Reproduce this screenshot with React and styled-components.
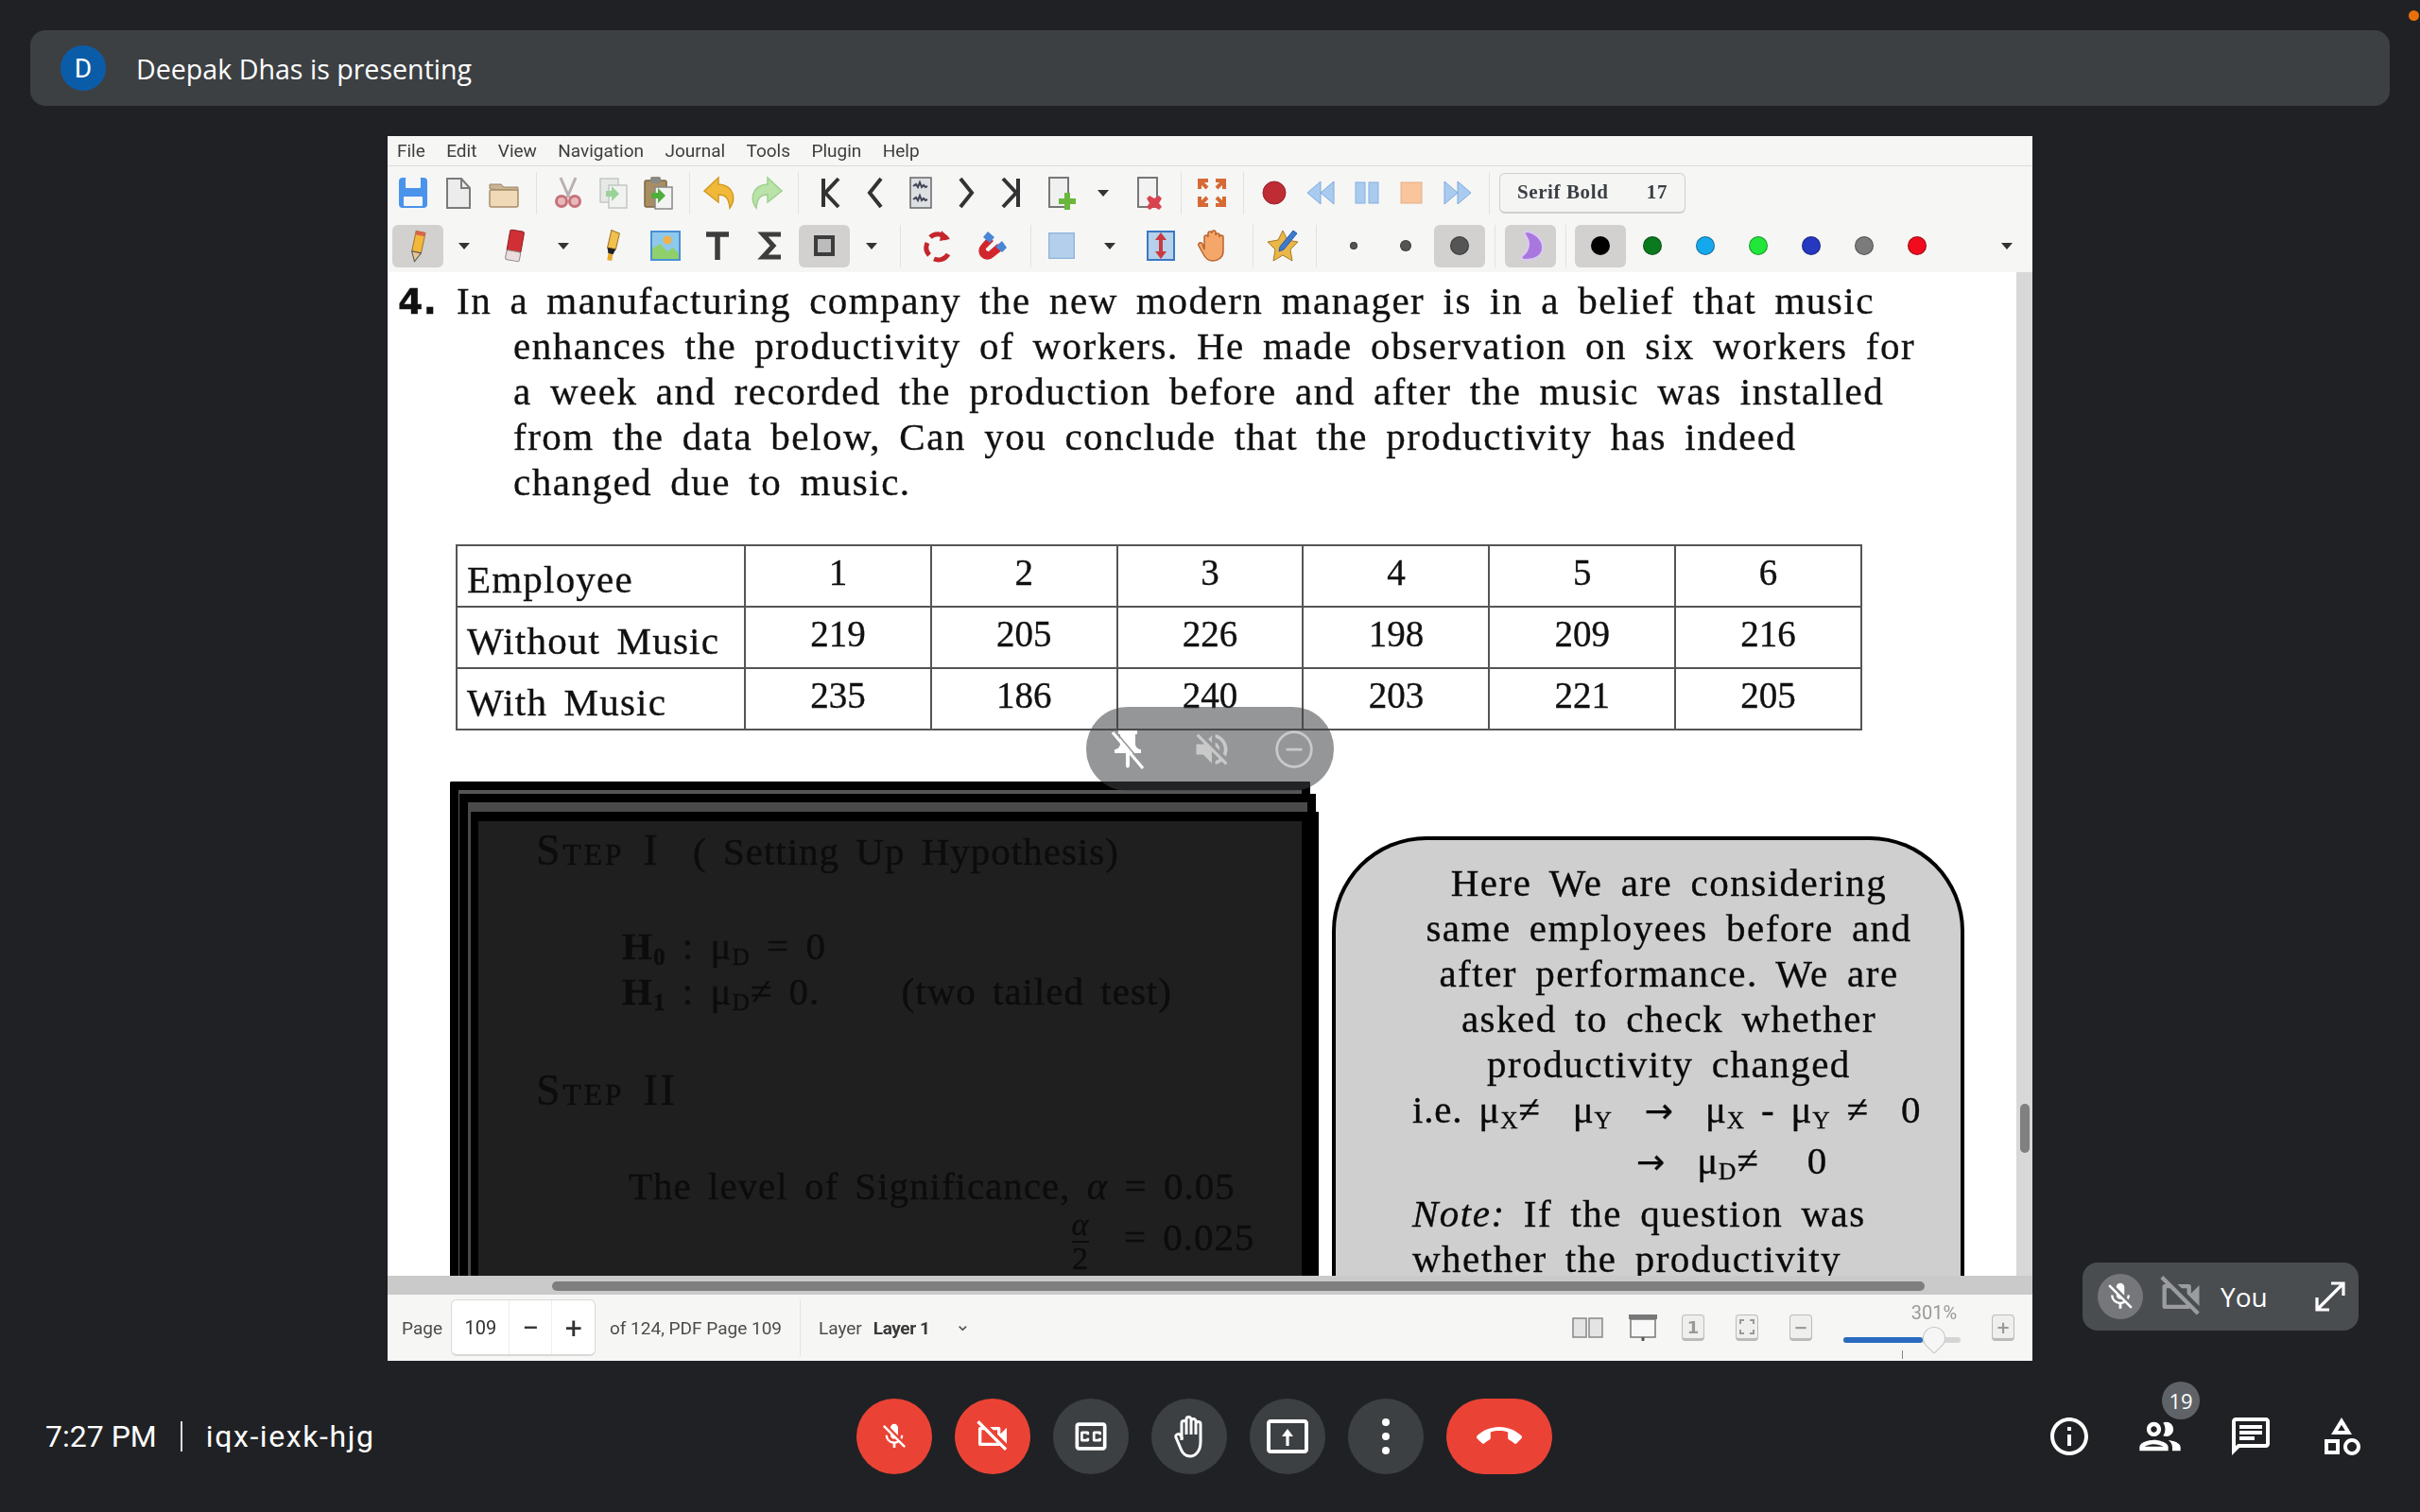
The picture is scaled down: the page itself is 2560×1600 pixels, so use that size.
import React from 'react'
import styled, { createGlobalStyle } from 'styled-components'
import { CircleMinus } from 'lucide-react'

const GlobalStyle = createGlobalStyle`
  html, body {
    margin: 0;
    padding: 0;
    background: #202124;
  }
`

// material style glyphs used by the call controls
const P = {
  micOff: 'M19 11h-1.7c0 .74-.16 1.43-.43 2.05l1.23 1.23c.56-.98.9-2.09.9-3.28zm-4.02.17c0-.06.02-.11.02-.17V5c0-1.66-1.34-3-3-3S9 3.34 9 5v.18l5.98 5.99zM4.27 3L3 4.27l6.01 6.01V11c0 1.66 1.33 3 2.99 3 .22 0 .44-.03.65-.08l1.66 1.66c-.71.33-1.5.52-2.31.52-2.76 0-5.3-2.1-5.3-5.1H5c0 3.41 2.72 6.23 6 6.72V21h2v-3.28c.91-.13 1.77-.45 2.54-.9L19.73 21 21 19.73 4.27 3z',
  camOff: 'M9.56 8l-2-2-4.15-4.14L2 3.27 4.73 6H4c-.55 0-1 .45-1 1v10c0 .55.45 1 1 1h12c.21 0 .39-.08.55-.18L19.73 21l1.41-1.41-8.86-8.86L9.56 8zM5 16V8h1.73l8 8H5zm10-8v2.61l6 6V6.5l-4 4V7c0-.55-.45-1-1-1h-5.61l2 2H15z',
  cc: 'M19 4H5c-1.11 0-2 .9-2 2v12c0 1.1.89 2 2 2h14c1.1 0 2-.9 2-2V6c0-1.1-.9-2-2-2zm0 14H5V6h14v12zM7 15h3c.55 0 1-.45 1-1v-1H9.5v.5h-2v-3h2v.5H11v-1c0-.55-.45-1-1-1H7c-.55 0-1 .45-1 1v4c0 .55.45 1 1 1zm7 0h3c.55 0 1-.45 1-1v-1h-1.5v.5h-2v-3h2v.5H18v-1c0-.55-.45-1-1-1h-3c-.55 0-1 .45-1 1v4c0 .55.45 1 1 1z',
  present: 'M21 3H3c-1.11 0-2 .89-2 2v14c0 1.11.89 2 2 2h18c1.11 0 2-.89 2-2V5c0-1.11-.89-2-2-2zm0 16.02H3V4.98h18v14.04zM11.2 17v-5H9l3-4 3 4h-2.2v5z',
  callEnd: 'M12 9c-1.6 0-3.15.25-4.6.72v3.1c0 .39-.23.74-.56.9-.98.49-1.87 1.12-2.66 1.85-.18.18-.43.28-.7.28-.28 0-.53-.11-.71-.29L.29 13.08c-.18-.17-.29-.42-.29-.7 0-.28.11-.53.29-.71C3.34 8.78 7.46 7 12 7s8.66 1.78 11.71 4.67c.18.18.29.43.29.71 0 .28-.11.53-.29.71l-2.48 2.48c-.18.18-.43.29-.71.29-.27 0-.52-.11-.7-.28-.79-.74-1.69-1.36-2.67-1.85-.33-.16-.56-.5-.56-.9v-3.1C15.15 9.25 13.6 9 12 9z',
  info: 'M11 7h2v2h-2zm0 4h2v6h-2zm1-9C6.48 2 2 6.48 2 12s4.48 10 10 10 10-4.48 10-10S17.52 2 12 2zm0 18c-4.41 0-8-3.59-8-8s3.59-8 8-8 8 3.59 8 8-3.59 8-8 8z',
  people: 'M9 13.75c-2.34 0-7 1.17-7 3.5V19h14v-1.75c0-2.33-4.66-3.5-7-3.5zM4.34 17c.84-.58 2.87-1.25 4.66-1.25s3.82.67 4.66 1.25H4.34zM9 12c1.93 0 3.5-1.57 3.5-3.5S10.93 5 9 5 5.5 6.57 5.5 8.5 7.07 12 9 12zm0-5c.83 0 1.5.67 1.5 1.5S9.83 10 9 10s-1.5-.67-1.5-1.5S8.17 7 9 7zm7.04 6.81c1.16.84 1.96 1.96 1.96 3.44V19h4v-1.75c0-2.02-3.5-3.17-5.96-3.44zM15 12c1.93 0 3.5-1.57 3.5-3.5S16.93 5 15 5c-.54 0-1.04.13-1.5.35.63.89 1 1.98 1 3.15s-.37 2.26-1 3.15c.46.22.96.35 1.5.35z',
  chat: 'M20 2H4c-1.1 0-1.99.9-1.99 2L2 22l4-4h14c1.1 0 2-.9 2-2V4c0-1.1-.9-2-2-2zm0 14H5.17L4 17.17V4h16v12zM6 12h8v2H6zm0-3h12v2H6zm0-3h12v2H6z',
  shapes: 'M12 2l-5.5 9h11L12 2zm0 3.84L13.93 9h-3.87L12 5.84zM17.5 13c-2.49 0-4.5 2.01-4.5 4.5s2.01 4.5 4.5 4.5 4.5-2.01 4.5-4.5-2.01-4.5-4.5-4.5zm0 7c-1.38 0-2.5-1.12-2.5-2.5s1.12-2.5 2.5-2.5 2.5 1.12 2.5 2.5-1.12 2.5-2.5 2.5zM3 21.5h8v-8H3v8zm2-6h4v4H5v-4z',
  pin: 'M16 9V4h1V2H7v2h1v5c0 1.66-1.34 3-3 3v2h5.97v7l1 1 1-1v-7H19v-2c-1.66 0-3-1.34-3-3z',
  volOff: 'M16.5 12c0-1.77-1.02-3.29-2.5-4.03v2.21l2.45 2.45c.03-.2.05-.41.05-.63zm2.5 0c0 .94-.2 1.82-.54 2.64l1.51 1.51C20.63 14.91 21 13.5 21 12c0-4.28-2.99-7.86-7-8.77v2.06c2.89.86 5 3.54 5 6.71zM4.27 3L3 4.27 7.73 9H3v6h4l5 5v-6.73l4.25 4.25c-.67.52-1.42.93-2.25 1.18v2.06c1.38-.31 2.63-.95 3.69-1.81L19.73 21 21 19.73l-9-9L4.27 3zM12 4L9.91 6.09 12 8.18V4z',
}

const Mat = ({ d, size = 24, color = '#fff' }) => (
  <svg width={size} height={size} viewBox="0 0 24 24" fill={color}>
    <path d={d} />
  </svg>
)

// toolbar drawings, all on a 36 unit grid
const Ico = ({ children, size = 36 }) => (
  <svg width={size} height={size} viewBox="0 0 36 36">
    {children}
  </svg>
)

const Save = () => (
  <Ico>
    <rect x="3" y="2" width="30" height="32" rx="4" fill="#4a93ea" />
    <rect x="10" y="2" width="16" height="11" rx="1" fill="#f4f6f8" />
    <rect x="8" y="22" width="20" height="10" rx="1" fill="#f4f6f8" />
  </Ico>
)
const NewPage = () => (
  <Ico>
    <path d="M6 3h15l9 10v21H6z" fill="#ececec" stroke="#7b7b7b" strokeWidth="2" />
    <path d="M21 3v10h9" fill="none" stroke="#7b7b7b" strokeWidth="2" />
  </Ico>
)
const Folder = () => (
  <Ico>
    <path d="M3 14V9h12l3 3h15v4z" fill="#c9b392" stroke="#9b8564" />
    <rect x="3" y="15" width="30" height="18" rx="2" fill="#f0d9b6" stroke="#a68d69" strokeWidth="1.5" />
  </Ico>
)
const Cut = () => (
  <Ico>
    <path d="M10 2l9 21M26 2l-9 21" stroke="#b9b0b0" strokeWidth="3" fill="none" />
    <circle cx="11" cy="27" r="5.5" fill="#e9b8bb" stroke="#c77279" strokeWidth="3" />
    <circle cx="25" cy="27" r="5.5" fill="#e9b8bb" stroke="#c77279" strokeWidth="3" />
  </Ico>
)
const Copy = () => (
  <Ico>
    <rect x="4" y="3" width="19" height="25" fill="#e7e9e7" stroke="#c4c7c4" strokeWidth="1.5" />
    <rect x="13" y="10" width="19" height="24" fill="#f1f3f1" stroke="#c4c7c4" strokeWidth="1.5" />
    <path d="M10 16h6v-5l8 8-8 8v-5h-6z" fill="#9ad29a" />
  </Ico>
)
const Paste = () => (
  <Ico>
    <rect x="3" y="5" width="23" height="28" rx="2" fill="#a98d63" stroke="#7b6642" strokeWidth="1.5" />
    <rect x="9" y="1" width="11" height="7" rx="2" fill="#8a8a84" />
    <rect x="14" y="12" width="18" height="23" fill="#f2f3f2" stroke="#888" strokeWidth="1.5" />
    <path d="M10 18h7v-5l8 8-8 8v-5h-7z" fill="#4fae3d" />
  </Ico>
)
const Undo = ({ color = '#f0b93a', edge = '#d29a22', flip }) => (
  <Ico>
    <path
      transform={flip ? 'translate(36 0) scale(-1 1)' : undefined}
      d="M16 2L1 16l15 12v-8c8 0 11 4 12 14 6-8 6-24-12-25z"
      fill={color}
      stroke={edge}
      strokeWidth="1.5"
    />
  </Ico>
)
const Nav = ({ d, w = 4 }) => (
  <Ico>
    <path d={d} fill="none" stroke="#333" strokeWidth={w} />
  </Ico>
)
const Thumb = () => (
  <Ico>
    <rect x="7" y="2" width="22" height="32" fill="#dde0e3" stroke="#666" strokeWidth="1.5" />
    <path d="M10 11l3-2 2 3 2-5 2 5 2-2 2 2 2-1M10 25l3-2 2 3 2-5 2 5 2-2 2 2 2-1" stroke="#445" strokeWidth="2" fill="none" />
  </Ico>
)
const AddPage = () => (
  <Ico>
    <path d="M6 2h20v31H6z" fill="#f0f0f0" stroke="#777" strokeWidth="2" />
    <path d="M22 18h6v6h6v6h-6v6h-6v-6h-6v-6h6z" fill="#6ab73c" />
  </Ico>
)
const DelPage = () => (
  <Ico>
    <path d="M6 2h20v31H6z" fill="#f2f2f2" stroke="#777" strokeWidth="2" />
    <path d="M18 21l5 3 5-3 3 3-3 5 3 4-3 3-5-3-5 3-3-3 3-4-3-5z" fill="#d9434f" />
  </Ico>
)
const Fullscreen = () => (
  <Ico>
    <g fill="none" stroke="#d56a35" strokeWidth="4">
      <path d="M5 14V5h9M6 6l7 7" />
      <path d="M31 14V5h-9M30 6l-7 7" />
      <path d="M5 22v9h9M6 30l7-7" />
      <path d="M31 22v9h-9M30 30l-7-7" />
    </g>
  </Ico>
)
const Record = () => (
  <Ico>
    <circle cx="18" cy="18" r="12" fill="#bf2c33" stroke="#96252a" />
  </Ico>
)
const Rewind = ({ flip }) => (
  <Ico>
    <g transform={flip ? 'translate(36 0) scale(-1 1)' : undefined} fill="#a9cbef" stroke="#7faadb">
      <path d="M17 6v24L3 18z" />
      <path d="M31 6v24L17 18z" />
    </g>
  </Ico>
)
const Pause = () => (
  <Ico>
    <rect x="6" y="7" width="10" height="22" fill="#a9cbef" stroke="#86afdf" />
    <rect x="20" y="7" width="10" height="22" fill="#a9cbef" stroke="#86afdf" />
  </Ico>
)
const Stop = () => (
  <Ico>
    <rect x="7" y="7" width="22" height="22" fill="#f8c59d" stroke="#e7ad82" />
  </Ico>
)
const Pencil = () => (
  <Ico>
    <g transform="rotate(12 18 18)">
      <rect x="13" y="3" width="10" height="22" fill="#f1b83c" stroke="#a4722a" />
      <rect x="13" y="3" width="10" height="4" fill="#d9634a" />
      <path d="M13 25h10l-5 10z" fill="#e7c796" stroke="#555" />
    </g>
  </Ico>
)
const Eraser = () => (
  <Ico>
    <g transform="rotate(10 18 18)">
      <rect x="10" y="2" width="15" height="23" rx="2" fill="#cf2f35" stroke="#8d2226" />
      <rect x="10" y="24" width="15" height="10" rx="2" fill="#eddcdc" stroke="#888" />
    </g>
  </Ico>
)
const Highlighter = () => (
  <Ico>
    <g transform="rotate(10 18 18)">
      <path d="M14 2l9 2-1 17h-9z" fill="#f2c04c" stroke="#99732a" />
      <path d="M13 21h9l-2 6h-5z" fill="#222" />
      <path d="M15 27h5v7h-5z" fill="#e8a92c" />
    </g>
  </Ico>
)
const ImageTool = () => (
  <Ico>
    <rect x="3" y="3" width="30" height="30" fill="#8ec9ec" stroke="#4a90d6" strokeWidth="2" />
    <circle cx="20" cy="12" r="4.5" fill="#f0b24a" />
    <path d="M4 32V21l8-5 8 8 6-4 6 6v6z" fill="#8fd06c" />
  </Ico>
)
const TextTool = () => (
  <Ico>
    <path d="M6 6h24M18 6v27" stroke="#3d3d3d" strokeWidth="5.5" fill="none" />
  </Ico>
)
const Sigma = () => (
  <Ico>
    <path d="M28 6H9l11 12L9 30h19" stroke="#3d3d3d" strokeWidth="5" fill="none" />
  </Ico>
)
const Square = () => (
  <Ico>
    <rect x="9" y="9" width="18" height="18" fill="#bcbcbc" stroke="#3d3d3d" strokeWidth="4" />
  </Ico>
)
const Rotate = () => (
  <Ico>
    <path d="M27 11A12 12 0 0 0 9 9M6 15a12 12 0 0 0 2 13M13 32a12 12 0 0 0 15-5" fill="none" stroke="#c3272c" strokeWidth="5" />
    <path d="M21 2l9 9-11 2z" fill="#c3272c" />
  </Ico>
)
const Magnet = () => (
  <Ico>
    <path d="M13 9L6 17a9 9 0 0 0 13 13l10-8-6-6-9 8a2.5 2.5 0 0 1-3-3l8-8z" fill="#d2262c" />
    <path d="M13 3l7 6-5 6-7-6zM28 13l5 7-5 5-7-6z" fill="#4a86d6" />
  </Ico>
)
const Fill = () => (
  <Ico>
    <rect x="3" y="3" width="30" height="30" fill="#b4cfeb" stroke="#91b4dc" strokeWidth="1.5" />
  </Ico>
)
const Vertical = () => (
  <Ico>
    <rect x="4" y="3" width="28" height="30" fill="#b6d1ec" stroke="#3a78c2" strokeWidth="2" />
    <path d="M18 4l6 8h-4v12h4l-6 8-6-8h4V12h-4z" fill="#c9393f" />
  </Ico>
)
const HandTool = () => (
  <Ico>
    <path
      d="M9 22V9a2 2 0 0 1 4 0V5a2 2 0 0 1 4 0v-1a2 2 0 0 1 4 0v3a2 2 0 0 1 4 0v2a2 2 0 0 1 4 0v15c0 6-5 10-11 10-5 0-8-3-10-7l-5-9a2 2 0 0 1 4-2z"
      fill="#f5a76a"
      stroke="#b9642e"
      strokeWidth="1.5"
    />
  </Ico>
)
const Star = () => (
  <Ico>
    <path d="M17 2l5 10 11 2-8 8 2 12-10-6-10 6 2-12-8-8 11-2z" fill="#e9b648" stroke="#a67a20" />
    <path d="M28 2l4 3-14 17-5 2 1-5z" fill="#3d7ad0" stroke="#2a5aa0" />
  </Ico>
)
const Crescent = () => (
  <Ico>
    <path d="M14 3c9 1 17 8 17 17 0 8-7 13-19 13-3 0-4-2-3-4 4-3 7-8 7-13 0-5-3-8-4-10-1-2 0-3 2-3z" fill="#a978de" stroke="#ddc9f2" strokeWidth="2" />
  </Ico>
)

// Main
export default function App() {
  return (
    <Page>
      <GlobalStyle />
      <Notify />
      <TopBar>
        <Avatar>D</Avatar>
        <TopTitle>Deepak Dhas is presenting</TopTitle>
      </TopBar>

      <Stage>
        <AppWindow>
          <MenuBar>
            {['File', 'Edit', 'View', 'Navigation', 'Journal', 'Tools', 'Plugin', 'Help'].map(m => (
              <MenuItem key={m}>{m}</MenuItem>
            ))}
          </MenuBar>

          <ToolRow $pad={3}>
            <Tool><Save /></Tool>
            <Tool><NewPage /></Tool>
            <Tool><Folder /></Tool>
            <Sep $w={20} />
            <Tool><Cut /></Tool>
            <Tool><Copy /></Tool>
            <Tool><Paste /></Tool>
            <Sep $w={17} />
            <Tool><Undo /></Tool>
            <Tool><Undo color="#b9e3a8" edge="#9fcf8b" flip /></Tool>
            <Sep $w={20} />
            <Tool><Nav d="M11 3v30M27 3L13 18l14 15" /></Tool>
            <Tool><Nav d="M24 3L12 18l12 15" /></Tool>
            <Tool><Thumb /></Tool>
            <Tool><Nav d="M12 3l12 15-12 15" /></Tool>
            <Tool><Nav d="M25 3v30M9 3l14 15L9 33" /></Tool>
            <Gap $w={4} />
            <Tool><AddPage /></Tool>
            <Tool $w={42}><Caret /></Tool>
            <Gap $w={4} />
            <Tool><DelPage /></Tool>
            <Sep $w={18} />
            <Tool><Fullscreen /></Tool>
            <Sep $w={18} />
            <Tool><Record /></Tool>
            <Gap $w={2} />
            <Tool><Rewind /></Tool>
            <Tool $w={47}><Pause /></Tool>
            <Tool $w={47}><Stop /></Tool>
            <Gap $w={1} />
            <Tool><Rewind flip /></Tool>
            <Sep $w={21} />
            <FontButton>
              <span>Serif Bold</span>
              <span>17</span>
            </FontButton>
          </ToolRow>

          <ToolRow $pad={5}>
            <Tool $w={54} $active><Pencil /></Tool>
            <Tool $w={44}><Caret /></Tool>
            <Tool $w={64}><Eraser /></Tool>
            <Tool $w={38}><Caret /></Tool>
            <Tool $w={66}><Highlighter /></Tool>
            <Tool $w={46}><ImageTool /></Tool>
            <Tool $w={64}><TextTool /></Tool>
            <Tool $w={50}><Sigma /></Tool>
            <Gap $w={4} />
            <Tool $w={54} $active><Square /></Tool>
            <Tool $w={46}><Caret /></Tool>
            <Sep $w={14} />
            <Tool $w={68}><Rotate /></Tool>
            <Tool $w={46}><Magnet /></Tool>
            <Sep $w={34} />
            <Tool $w={32}><Fill /></Tool>
            <Tool $w={70}><Caret /></Tool>
            <Tool $w={38}><Vertical /></Tool>
            <Tool $w={72}><HandTool /></Tool>
            <Sep $w={12} />
            <Tool $w={54}><Star /></Tool>
            <Sep $w={14} />
            <Tool $w={66}><Dot $size={8} $color="#555" /></Tool>
            <Tool $w={44}><Dot $size={12} $color="#555" /></Tool>
            <Gap $w={8} />
            <Tool $w={54} $active><Dot $size={20} $color="#555" /></Tool>
            <Sep $w={21} />
            <Tool $w={54} $active><Crescent /></Tool>
            <Sep $w={20} />
            <Tool $w={54} $active><Dot $size={20} $color="#000" /></Tool>
            {['#0b7a1f', '#16a8ec', '#22e63a', '#2438c0', '#7b7b7b', '#f00c1c'].map(c => (
              <Tool key={c} $w={56}><Dot $size={20} $color={c} /></Tool>
            ))}
            <Gap $w={45} />
            <Tool $w={44}><Caret /></Tool>
          </ToolRow>

          <DocArea>
            <DocPage>
              <Question>
                <QLine><QNum>4.</QNum>In a manufacturing company the new modern manager is in a belief that music</QLine>
                <QLine $indent>enhances the productivity of workers. He made observation on six workers for</QLine>
                <QLine $indent>a week and recorded the production before and after the music was installed</QLine>
                <QLine $indent>from the data below, Can you conclude that the productivity has indeed</QLine>
                <QLine $indent>changed due to music.</QLine>
              </Question>

              <DataTable>
                <tbody>
                  <tr>
                    <LabelCell>Employee</LabelCell>
                    {[1, 2, 3, 4, 5, 6].map(n => <NumCell key={n}>{n}</NumCell>)}
                  </tr>
                  <tr>
                    <LabelCell>Without Music</LabelCell>
                    {[219, 205, 226, 198, 209, 216].map(n => <NumCell key={n}>{n}</NumCell>)}
                  </tr>
                  <tr>
                    <LabelCell>With Music</LabelCell>
                    {[235, 186, 240, 203, 221, 205].map(n => <NumCell key={n}>{n}</NumCell>)}
                  </tr>
                </tbody>
              </DataTable>

              <LowerRow>
                <FrameOuter>
                  <FrameMid>
                    <FrameInner>
                      <DarkLine $indent={61}>
                        <SmallCaps>Step I</SmallCaps>  ( Setting Up Hypothesis)
                      </DarkLine>
                      <DarkLine $indent={152} $top={52}>
                        <b>H<Sub>0</Sub></b> : μ<Sub>D</Sub> = 0
                      </DarkLine>
                      <DarkLine $indent={152}>
                        <b>H<Sub>1</Sub></b> : μ<Sub>D</Sub>≠ 0.     (two tailed test)
                      </DarkLine>
                      <DarkLine $indent={61} $top={57}>
                        <SmallCaps>Step II</SmallCaps>
                      </DarkLine>
                      <DarkLine $indent={159} $top={52}>
                        The level of Significance, <i>α</i> = 0.05
                      </DarkLine>
                      <DarkLine $indent={618}>
                        <Fraction>
                          <i>α</i>
                          <span>2</span>
                        </Fraction>
                        = 0.025
                      </DarkLine>
                    </FrameInner>
                  </FrameMid>
                </FrameOuter>

                <Callout>
                  <CalloutLine $center>Here We are considering</CalloutLine>
                  <CalloutLine $center>same employees before and</CalloutLine>
                  <CalloutLine $center>after performance. We are</CalloutLine>
                  <CalloutLine $center>asked to check whether</CalloutLine>
                  <CalloutLine $center>productivity changed</CalloutLine>
                  <MathLine>i.e. μ<Sub>X</Sub>≠  μ<Sub>Y</Sub>  <Arrow>→</Arrow>  μ<Sub>X</Sub> - μ<Sub>Y</Sub> ≠  0</MathLine>
                  <MathLine $indent={237} $top={6}><Arrow>→</Arrow>  μ<Sub>D</Sub>≠   0</MathLine>
                  <CalloutLine $top={8}><i>Note:</i> If the question was</CalloutLine>
                  <CalloutLine>whether the productivity</CalloutLine>
                </Callout>
              </LowerRow>
            </DocPage>
            <VTrack>
              <VThumb />
            </VTrack>
          </DocArea>

          <HTrack>
            <HThumb />
          </HTrack>

          <StatusBar>
            <StatusText>Page</StatusText>
            <Stepper>
              <StepCell $w={61}>109</StepCell>
              <StepCell $w={46} $big>−</StepCell>
              <StepCell $w={46} $big>+</StepCell>
            </Stepper>
            <StatusText>of 124, PDF Page 109</StatusText>
            <StatusSep />
            <StatusText>Layer</StatusText>
            <LayerName>Layer 1</LayerName>
            <Chevron>⌄</Chevron>
            <ViewIcons>
              <svg width="34" height="24" viewBox="0 0 34 24">
                <rect x="1" y="2" width="14" height="20" fill="#e4e4e4" stroke="#888" strokeWidth="1.5" />
                <rect x="18" y="2" width="14" height="20" fill="#e4e4e4" stroke="#888" strokeWidth="1.5" />
              </svg>
              <svg width="32" height="30" viewBox="0 0 32 30">
                <rect x="1" y="1" width="30" height="5" fill="#777" />
                <rect x="3" y="6" width="26" height="19" fill="#f8f8f8" stroke="#777" strokeWidth="1.5" />
                <path d="M16 25v4" stroke="#555" strokeWidth="3" />
              </svg>
              <KeyCap $ml={0}>1</KeyCap>
              <KeyCap>
                <svg width="16" height="16" viewBox="0 0 16 16" fill="none" stroke="#999" strokeWidth="2">
                  <path d="M1 5V1h4M11 1h4v4M1 11v4h4M11 15h4v-4" />
                </svg>
              </KeyCap>
              <KeyCap>−</KeyCap>
            </ViewIcons>
            <ZoomBox>
              <ZoomLabel>301%</ZoomLabel>
              <Slider>
                <SliderFill />
                <SliderTick $x={62} />
                <SliderKnob />
              </Slider>
            </ZoomBox>
            <KeyCap $ml={33}>+</KeyCap>
          </StatusBar>
        </AppWindow>

        <HoverPill>
          <svg width="48" height="48" viewBox="0 0 24 24">
            <path d={P.pin} fill="#fff" />
            <path d="M4 3l16 19" stroke="#fff" strokeWidth="1.6" />
            <path d="M5 2l16 19" stroke="#999" strokeWidth=".8" />
          </svg>
          <Mat d={P.volOff} size={44} color="#c9c9c9" />
          <CircleMinus size={44} color="#c9c9c9" strokeWidth={1.5} />
        </HoverPill>

        <SelfView>
          <SelfMic><Mat d={P.micOff} size={34} /></SelfMic>
          <Mat d={P.camOff} size={52} color="#9a9c9f" />
          <SelfName>You</SelfName>
          <svg width="32" height="32" viewBox="0 0 32 32" fill="none" stroke="#fff" strokeWidth="3.2">
            <path d="M3 29L29 3M17 2h13v13M2 17v13h13" />
          </svg>
        </SelfView>
      </Stage>

      <BottomBar>
        <MeetInfo>
          <span>7:27 PM</span>
          <InfoDivider />
          <MeetCode>iqx-iexk-hjg</MeetCode>
        </MeetInfo>
        <Controls>
          <RoundBtn $red><Mat d={P.micOff} size={32} /></RoundBtn>
          <RoundBtn $red><Mat d={P.camOff} size={40} /></RoundBtn>
          <RoundBtn><Mat d={P.cc} size={44} /></RoundBtn>
          <RoundBtn>
            <svg width="48" height="48" viewBox="0 0 48 48" fill="none" stroke="#fff" strokeWidth="3">
              <path d="M16 28V10a2.5 2.5 0 0 1 5 0v12M21 22V6a2.5 2.5 0 0 1 5 0v16M26 22V8a2.5 2.5 0 0 1 5 0v14M31 22V11a2.5 2.5 0 0 1 5 0v19c0 9-5 15-11 15-6 0-8.5-4-10-8l-5-12c-1-3 3-5 5-2l2 4" />
            </svg>
          </RoundBtn>
          <RoundBtn>
            <Mat d={P.present} size={48} />
          </RoundBtn>
          <RoundBtn>
            <svg width="12" height="44" viewBox="0 0 12 44" fill="#fff">
              <circle cx="6" cy="7" r="4" />
              <circle cx="6" cy="22" r="4" />
              <circle cx="6" cy="37" r="4" />
            </svg>
          </RoundBtn>
          <RoundBtn $red $w={112}><Mat d={P.callEnd} size={48} /></RoundBtn>
        </Controls>
        <SideIcons>
          <SideBtn><Mat d={P.info} size={48} /></SideBtn>
          <SideBtn>
            <Mat d={P.people} size={52} />
            <Badge>19</Badge>
          </SideBtn>
          <SideBtn><Mat d={P.chat} size={48} /></SideBtn>
          <SideBtn><Mat d={P.shapes} size={48} /></SideBtn>
        </SideIcons>
      </BottomBar>
    </Page>
  )
}

// Style
const Page = styled.div`
  position: relative;
  width: 2560px;
  height: 1600px;
  overflow: hidden;
  background: #202124;
  display: flex;
  flex-direction: column;
`
const Notify = styled.div`
  position: absolute;
  top: 11px;
  right: 1px;
  width: 11px;
  height: 11px;
  border-radius: 50%;
  background: #e8710a;
`
const TopBar = styled.div`
  height: 80px;
  flex: none;
  margin: 32px 32px 32px;
  padding-left: 32px;
  display: flex;
  align-items: center;
  border-radius: 16px;
  background: #3c4043;
`
const Avatar = styled.div`
  width: 48px;
  height: 48px;
  border-radius: 50%;
  background: #0b5ca8;
  color: #fff;
  display: flex;
  align-items: center;
  justify-content: center;
  font: 400 28px 'Roboto', sans-serif;
`
const TopTitle = styled.div`
  margin-left: 32px;
  color: #fff;
  font: 400 28.6px 'Open Sans', sans-serif;
`
const Stage = styled.div`
  position: relative;
  height: 1296px;
  flex: none;
  padding-left: 410px;
`
const AppWindow = styled.div`
  width: 1740px;
  height: 1296px;
  display: flex;
  flex-direction: column;
  background: #f6f6f5;
  filter: blur(0.5px);
`
const MenuBar = styled.div`
  height: 32px;
  flex: none;
  padding-left: 10px;
  display: flex;
  align-items: center;
  gap: 22.4px;
  border-bottom: 1px solid #dcdcdc;
  box-sizing: border-box;
`
const MenuItem = styled.span`
  font: 400 19px 'Roboto', sans-serif;
  color: #3d3d3d;
`
const ToolRow = styled.div`
  height: 56px;
  flex: none;
  padding-left: ${p => p.$pad}px;
  display: flex;
  align-items: center;
`
const Tool = styled.div`
  width: ${p => p.$w || 48}px;
  height: 45px;
  flex: none;
  display: flex;
  align-items: center;
  justify-content: center;
  border-radius: 6px;
  background: ${p => (p.$active ? '#d2d1d0' : 'transparent')};
`
const Gap = styled.div`
  width: ${p => p.$w}px;
  flex: none;
`
const Sep = styled.div`
  width: ${p => p.$w}px;
  height: 45px;
  flex: none;
  display: flex;
  justify-content: center;
  &::after {
    content: '';
    width: 1px;
    background: #e2e2e1;
  }
`
const Caret = styled.div`
  width: 0;
  height: 0;
  border-left: 6px solid transparent;
  border-right: 6px solid transparent;
  border-top: 7px solid #333;
`
const Dot = styled.div`
  width: ${p => p.$size}px;
  height: ${p => p.$size}px;
  border-radius: 50%;
  background: ${p => p.$color};
  border: 1px solid rgba(0, 0, 0, 0.35);
  box-sizing: border-box;
`
const FontButton = styled.div`
  width: 197px;
  height: 43px;
  box-sizing: border-box;
  padding: 0 18px;
  display: flex;
  align-items: center;
  justify-content: space-between;
  border: 1px solid #cfcfce;
  border-bottom-width: 2px;
  border-radius: 6px;
  background: #f5f5f4;
  font: 700 21px 'Liberation Serif', serif;
  letter-spacing: 0.6px;
  color: #3a3f45;
`
const DocArea = styled.div`
  height: 1062px;
  flex: none;
  display: flex;
  overflow: hidden;
  background: #fff;
`
const DocPage = styled.div`
  flex: 1;
  min-width: 0;
  overflow: hidden;
  padding: 6px 0 0 11px;
  font-family: 'Liberation Serif', serif;
  color: #111;
  -webkit-text-stroke: 0.35px currentColor;
`
const Question = styled.div`
  font-size: 41px;
  line-height: 48px;
  letter-spacing: 1.5px;
  word-spacing: 7.5px;
`
const QLine = styled.div`
  white-space: nowrap;
  margin-left: ${p => (p.$indent ? 122 : 0)}px;
`
const QNum = styled.span`
  display: inline-block;
  width: 62px;
  font: 700 38px 'DejaVu Sans', sans-serif;
  letter-spacing: 0;
`
const DataTable = styled.table`
  margin: 42px 0 0 61px;
  border-collapse: collapse;
  table-layout: fixed;
  width: 1488px;
`
const LabelCell = styled.td`
  width: 305px;
  height: 65px;
  box-sizing: border-box;
  padding: 6px 0 0 10px;
  border: 2px solid #555;
  font-size: 41px;
  line-height: 48px;
  letter-spacing: 1.2px;
  word-spacing: 6px;
  white-space: nowrap;
  vertical-align: middle;
`
const NumCell = styled.td`
  box-sizing: border-box;
  padding-bottom: 10px;
  border: 2px solid #555;
  font-size: 39px;
  text-align: center;
  vertical-align: middle;
`
const LowerRow = styled.div`
  margin: 54px 0 0 55px;
  display: flex;
  align-items: flex-start;
`
const FrameOuter = styled.div`
  width: 910px;
  height: 560px;
  flex: none;
  box-sizing: border-box;
  padding-top: 4px;
  border: 9px solid #000;
  border-bottom: 0;
  background: #555;
  border-radius: 2px 2px 0 0;
`
const FrameMid = styled.div`
  width: 906px;
  height: 100%;
  box-sizing: border-box;
  margin-left: 1px;
  padding-top: 10px;
  border: 9px solid #000;
  border-bottom: 0;
  background: #4a4a4a;
`
const FrameInner = styled.div`
  width: 897px;
  height: 100%;
  box-sizing: border-box;
  margin-left: 3px;
  padding-top: 7px;
  border-top: 10px solid #000;
  border-left: 8px solid #000;
  border-right: 18px solid #000;
  background: #1f1f1f;
  color: #0c0c0c;
`
const DarkLine = styled.div`
  margin: ${p => p.$top || 0}px 0 0 ${p => p.$indent}px;
  font-size: 41px;
  line-height: 48px;
  letter-spacing: 1px;
  word-spacing: 6px;
  white-space: pre;
`
const SmallCaps = styled.span`
  font-variant: small-caps;
  font-size: 46px;
  letter-spacing: 2.7px;
`
const Sub = styled.sub`
  font-size: 0.62em;
  line-height: 0;
  vertical-align: -0.25em;
`
const Arrow = styled.span`
  font: 400 36px 'DejaVu Sans', sans-serif;
  letter-spacing: 0;
`
const Fraction = styled.span`
  display: inline-flex;
  flex-direction: column;
  align-items: center;
  vertical-align: middle;
  width: 38px;
  margin-right: 27px;
  line-height: 34px;
  font-size: 34px;
  & > span {
    border-top: 2px solid #0c0c0c;
  }
`
const Callout = styled.div`
  margin: 58px 0 0 23px;
  width: 669px;
  height: 520px;
  flex: none;
  box-sizing: border-box;
  padding: 21px 37px 0 81px;
  border: 4px solid #000;
  border-bottom: 0;
  border-radius: 100px 100px 0 0;
  background: #cfcfcf;
  color: #0a0a0a;
`
const CalloutLine = styled.div`
  margin: ${p => p.$top || 0}px 0 0 ${p => p.$indent || 0}px;
  text-align: ${p => (p.$center ? 'center' : 'left')};
  font-size: 41px;
  line-height: 48px;
  letter-spacing: 1.5px;
  word-spacing: 7.5px;
  white-space: pre;
`
const MathLine = styled(CalloutLine)`
  letter-spacing: 0.8px;
  word-spacing: 6px;
`
const VTrack = styled.div`
  width: 17px;
  flex: none;
  background: #d8d8d8;
  position: relative;
`
const VThumb = styled.div`
  position: absolute;
  left: 4px;
  top: 880px;
  width: 10px;
  height: 52px;
  border-radius: 5px;
  background: #808080;
`
const HTrack = styled.div`
  height: 20px;
  flex: none;
  padding: 6px 0 4px 174px;
  box-sizing: border-box;
  background: #cacaca;
`
const HThumb = styled.div`
  width: 1452px;
  height: 10px;
  border-radius: 5px;
  background: #7e7e7e;
`
const StatusBar = styled.div`
  height: 70px;
  flex: none;
  padding: 0 19px 0 15px;
  display: flex;
  align-items: center;
  font: 400 19px 'Roboto', sans-serif;
  color: #4c4c4c;
`
const StatusText = styled.span`
  white-space: nowrap;
`
const Stepper = styled.div`
  width: 153px;
  height: 60px;
  flex: none;
  box-sizing: border-box;
  margin: 0 15px 0 9px;
  display: flex;
  border: 1px solid #d8d8d8;
  border-bottom-width: 2px;
  border-radius: 6px;
  background: #fff;
`
const StepCell = styled.div`
  width: ${p => p.$w}px;
  display: flex;
  align-items: center;
  justify-content: center;
  border-left: 1px solid ${p => (p.$big ? '#eee' : 'transparent')};
  color: #333;
  font-size: ${p => (p.$big ? '32px' : '20px')};
`
const StatusSep = styled.div`
  width: 1px;
  height: 60px;
  margin: 0 19px;
  background: #e4e4e3;
`
const LayerName = styled.span`
  margin-left: 12px;
  font-weight: 700;
  letter-spacing: -0.4px;
  white-space: nowrap;
  color: #3a3a3a;
`
const Chevron = styled.span`
  margin: -8px 0 0 26px;
  font-size: 20px;
  color: #555;
`
const ViewIcons = styled.div`
  margin-left: auto;
  display: flex;
  align-items: center;
  gap: 25px;
`
const KeyCap = styled.div`
  width: 24px;
  height: 28px;
  flex: none;
  box-sizing: border-box;
  margin-left: ${p => p.$ml ?? 8}px;
  display: flex;
  align-items: center;
  justify-content: center;
  border: 1px solid #bbb;
  border-bottom-width: 3px;
  border-radius: 4px;
  background: #efefee;
  font: 700 18px 'DejaVu Sans', sans-serif;
  color: #999;
`
const ZoomBox = styled.div`
  width: 124px;
  flex: none;
  margin-left: 33px;
  display: flex;
  flex-direction: column;
  align-items: center;
`
const ZoomLabel = styled.span`
  margin: -12px 0 14px 68px;
  font-size: 20px;
  color: #9a9a9a;
`
const Slider = styled.div`
  position: relative;
  width: 124px;
  height: 6px;
  border-radius: 3px;
  background: #d5d5d5;
`
const SliderFill = styled.div`
  width: 84px;
  height: 6px;
  border-radius: 3px;
  background: #2a6bc0;
`
const SliderTick = styled.div`
  position: absolute;
  left: ${p => p.$x}px;
  top: 14px;
  width: 1px;
  height: 9px;
  background: #888;
`
const SliderKnob = styled.div`
  position: absolute;
  left: 84px;
  top: -11px;
  width: 24px;
  height: 24px;
  box-sizing: border-box;
  transform: rotate(45deg);
  border-radius: 50% 50% 2px 50%;
  border: 1px solid #c6c6c6;
  background: #f6f6f6;
`
const HoverPill = styled.div`
  position: absolute;
  left: 1149px;
  top: 604px;
  width: 262px;
  height: 89px;
  padding: 0 20px;
  box-sizing: border-box;
  display: flex;
  align-items: center;
  justify-content: space-between;
  border-radius: 44px;
  background: rgba(60, 64, 67, 0.55);
`
const SelfView = styled.div`
  position: absolute;
  left: 2203px;
  top: 1192px;
  width: 292px;
  height: 72px;
  padding: 0 14px 0 16px;
  box-sizing: border-box;
  display: flex;
  align-items: center;
  border-radius: 16px;
  background: #4a4d50;
  & > svg:first-of-type {
    margin-left: 14px;
  }
`
const SelfMic = styled.div`
  width: 48px;
  height: 48px;
  flex: none;
  display: flex;
  align-items: center;
  justify-content: center;
  border-radius: 50%;
  background: #75777a;
`
const SelfName = styled.span`
  margin: 0 auto 0 16px;
  font: 400 28px 'Open Sans', sans-serif;
  color: #fff;
`
const BottomBar = styled.div`
  flex: 1;
  display: grid;
  grid-template-columns: 906px auto 1fr;
  padding-top: 40px;
  box-sizing: border-box;
  color: #fff;
`
const MeetInfo = styled.div`
  height: 80px;
  padding-left: 48px;
  display: flex;
  align-items: center;
  font: 400 32px 'Roboto', sans-serif;
`
const InfoDivider = styled.div`
  width: 2px;
  height: 32px;
  margin: 0 25px;
  background: #dadce0;
`
const MeetCode = styled.span`
  letter-spacing: 1.6px;
`
const Controls = styled.div`
  display: flex;
  gap: 24px;
`
const RoundBtn = styled.div`
  width: ${p => p.$w || 80}px;
  height: 80px;
  display: flex;
  align-items: center;
  justify-content: center;
  border-radius: 40px;
  background: ${p => (p.$red ? '#ea4335' : '#3c4043')};
`
const SideIcons = styled.div`
  display: flex;
  justify-content: flex-end;
  padding-right: 35px;
`
const SideBtn = styled.div`
  position: relative;
  width: 96px;
  height: 80px;
  display: flex;
  align-items: center;
  justify-content: center;
`
const Badge = styled.div`
  position: absolute;
  top: -18px;
  left: 50px;
  width: 40px;
  height: 40px;
  display: flex;
  align-items: center;
  justify-content: center;
  border-radius: 50%;
  background: #5f6368;
  font: 500 22px 'Open Sans', sans-serif;
`
